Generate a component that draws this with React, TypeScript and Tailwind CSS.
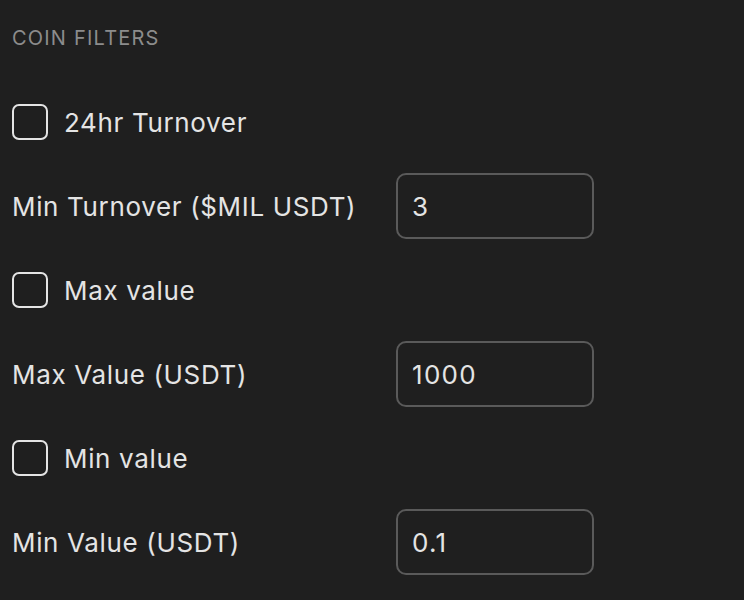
import { useState } from "react";

type Filter = {
	check: string;
	label: string;
	value: string;
};

const filters: Filter[] = [
	{ check: "24hr Turnover", label: "Min Turnover ($MIL USDT)", value: "3" },
	{ check: "Max value", label: "Max Value (USDT)", value: "1000" },
	{ check: "Min value", label: "Min Value (USDT)", value: "0.1" },
];

function FilterBlock({ filter }: { filter: Filter }) {
	const [checked, setChecked] = useState(false);
	const [value, setValue] = useState(filter.value);

	return (
		<>
			<label className="flex h-[84px] cursor-pointer items-center gap-4">
				<button
					type="button"
					onClick={() => setChecked(!checked)}
					className="h-9 w-9 shrink-0 rounded-[7px] border-2 border-[#e4e4e4]"
				/>
				<span className="text-[26px] tracking-[0.025em] text-[#e4e4e4]">{filter.check}</span>
			</label>
			<div className="flex h-[84px] items-center">
				<span className="w-[384px] text-[26px] tracking-[0.025em] text-[#e4e4e4]">
					{filter.label}
				</span>
				<input
					value={value}
					onChange={(e) => setValue(e.target.value)}
					className="h-[66px] w-[198px] rounded-[10px] border-2 border-[#5a5a5a] bg-transparent px-[14px] text-[26px] tracking-[0.05em] text-[#e4e4e4] outline-none"
				/>
			</div>
		</>
	);
}

export default function App() {
	return (
		<div
			className="min-h-[600px] bg-[#1f1f1f] px-3"
			style={{ fontFamily: "Inter, 'Noto Sans', sans-serif" }}
		>
			<h2 className="flex h-[80px] items-start pt-[26px] text-[20px] leading-6 tracking-[0.06em] text-[#8c8c8c]">
				COIN FILTERS
			</h2>
			{filters.map((f) => (
				<FilterBlock key={f.check} filter={f} />
			))}
		</div>
	);
}
